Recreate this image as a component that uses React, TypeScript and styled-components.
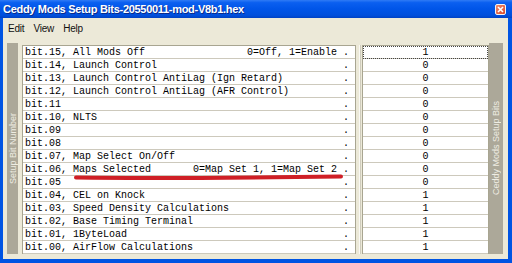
import React from 'react';
import styled, { createGlobalStyle } from 'styled-components';

const GlobalStyle = createGlobalStyle`
    html, body {
        margin: 0;
        padding: 0;
        background: #ffffff;
    }
`;

const Window = styled.div`
    width: 512px;
    height: 263px;
    display: flex;
    flex-direction: column;
    box-sizing: border-box;
    overflow: hidden;
    background: #0054e3;
    font-family: 'Liberation Sans', Arial, sans-serif;
`;

const TitleBar = styled.div`
    height: 18px;
    flex: none;
    display: flex;
    align-items: center;
    justify-content: space-between;
    padding: 0 6px 0 3px;
    background: linear-gradient(#2f7bf5 0%, #0a5ff0 15%, #0055e8 50%, #004fdc 85%, #0042c4 100%);
`;

const Title = styled.span`
    color: #ffffff;
    font-weight: bold;
    font-size: 11px;
    letter-spacing: -0.3px;
    text-shadow: 1px 1px 0 #0a2a8a;
    white-space: nowrap;
`;

const CloseButton = styled.div`
    width: 11px;
    height: 11px;
    box-sizing: border-box;
    border: 1px solid #f4f4f4;
    border-radius: 2px;
    background: linear-gradient(135deg, #f08a6c, #d8482a);
    display: flex;
    align-items: center;
    justify-content: center;
`;

const Frame = styled.div`
    flex: 1;
    display: flex;
    flex-direction: column;
    margin: 0 4px 4px 3px;
    background: #ece9d8;
`;

const MenuBar = styled.div`
    height: 20px;
    flex: none;
    display: flex;
    align-items: center;
    gap: 9px;
    padding-left: 5px;
    font-size: 10px;
    color: #111;
`;

const MenuItem = styled.span`
    letter-spacing: -0.2px;
`;

const Body = styled.div`
    flex: 1;
    display: flex;
    padding: 5px 5px 5px 4px;
    min-height: 0;
`;

const SideStrip = styled.div<{ $width: number }>`
    width: ${p => p.$width}px;
    flex: none;
    background: #aca899;
    display: flex;
    align-items: center;
    justify-content: center;
`;

const SideLabel = styled.span`
    writing-mode: vertical-rl;
    transform: rotate(180deg);
    font-size: 9px;
    color: #efede3;
    white-space: nowrap;
`;

const Pane = styled.div<{ $width?: number }>`
    position: relative;
    margin-top: 2px;
    box-sizing: border-box;
    background: #ffffff;
    border: 1px solid #a8a591;
    border-bottom: none;
    ${p => (p.$width ? `width: ${p.$width}px; flex: none;` : 'flex: 1;')}
`;

const LabelsPane = styled(Pane)`
    margin-left: 4px;
`;

const Splitter = styled.div`
    width: 6px;
    flex: none;
    display: flex;
    justify-content: center;
    padding-top: 2px;

    &::after {
        content: '';
        width: 1px;
        margin-left: 2px;
        background: #cfccbd;
        box-shadow: -1px 0 0 #faf9f4;
    }
`;

const Row = styled.div`
    height: 12px;
    border-bottom: 1px solid #cdc9bc;
    font-family: 'Liberation Mono', 'Courier New', monospace;
    font-size: 10px;
    line-height: 13px;
    color: #000;
    white-space: pre;
    overflow: hidden;
`;

const LabelRow = styled(Row)`
    padding-left: 2px;
`;

const ValueRow = styled(Row)<{ $focused?: boolean }>`
    text-align: center;
    outline: ${p => (p.$focused ? '1px dotted #444' : 'none')};
    outline-offset: -1px;
`;

const Marker = styled.svg`
    position: absolute;
    left: 0;
    top: 0;
    pointer-events: none;
`;

interface SetupBit {
    label: string;
    hint?: string;
    value: number;
}

const bits: SetupBit[] = [
    { label: 'bit.15, All Mods Off', hint: '0=Off, 1=Enable', value: 1 },
    { label: 'bit.14, Launch Control', value: 0 },
    { label: 'bit.13, Launch Control AntiLag (Ign Retard)', value: 0 },
    { label: 'bit.12, Launch Control AntiLag (AFR Control)', value: 0 },
    { label: 'bit.11', value: 0 },
    { label: 'bit.10, NLTS', value: 0 },
    { label: 'bit.09', value: 0 },
    { label: 'bit.08', value: 0 },
    { label: 'bit.07, Map Select On/Off', value: 0 },
    { label: 'bit.06, Maps Selected', hint: '0=Map Set 1, 1=Map Set 2', value: 0 },
    { label: 'bit.05', value: 0 },
    { label: 'bit.04, CEL on Knock', value: 1 },
    { label: 'bit.03, Speed Density Calculations', value: 1 },
    { label: 'bit.02, Base Timing Terminal', value: 1 },
    { label: 'bit.01, 1ByteLoad', value: 1 },
    { label: 'bit.00, AirFlow Calculations', value: 1 },
];

// fixed-width line: label, hint right-aligned to col 52, then " ."
const formatRow = (bit: SetupBit) => {
    const hint = bit.hint ?? '';
    return bit.label.padEnd(52 - hint.length) + hint + ' .';
};

export default function App() {
    return (
        <>
            <GlobalStyle />
            <Window>
                <TitleBar>
                    <Title>Ceddy Mods Setup Bits-20550011-mod-V8b1.hex</Title>
                    <CloseButton>
                        <svg width="7" height="7" viewBox="0 0 7 7">
                            <path d="M1 1 L6 6 M6 1 L1 6" stroke="#fff" strokeWidth="1.6" />
                        </svg>
                    </CloseButton>
                </TitleBar>
                <Frame>
                    <MenuBar>
                        <MenuItem>Edit</MenuItem>
                        <MenuItem>View</MenuItem>
                        <MenuItem>Help</MenuItem>
                    </MenuBar>
                    <Body>
                        <SideStrip $width={11}>
                            <SideLabel>Setup Bit Number</SideLabel>
                        </SideStrip>
                        <LabelsPane>
                            {bits.map(bit => (
                                <LabelRow key={bit.label}>{formatRow(bit)}</LabelRow>
                            ))}
                            <Marker width="334" height="209">
                                <path
                                    d="M53 131.5 C 120 132.5, 240 131.5, 318 130.5"
                                    stroke="#cf1f26"
                                    strokeWidth="4"
                                    strokeLinecap="round"
                                    fill="none"
                                />
                            </Marker>
                        </LabelsPane>
                        <Splitter />
                        <Pane $width={127}>
                            {bits.map((bit, i) => (
                                <ValueRow key={bit.label} $focused={i === 0}>
                                    {bit.value}
                                </ValueRow>
                            ))}
                        </Pane>
                        <SideStrip $width={14}>
                            <SideLabel>Ceddy Mods Setup Bits</SideLabel>
                        </SideStrip>
                    </Body>
                </Frame>
            </Window>
        </>
    );
}
